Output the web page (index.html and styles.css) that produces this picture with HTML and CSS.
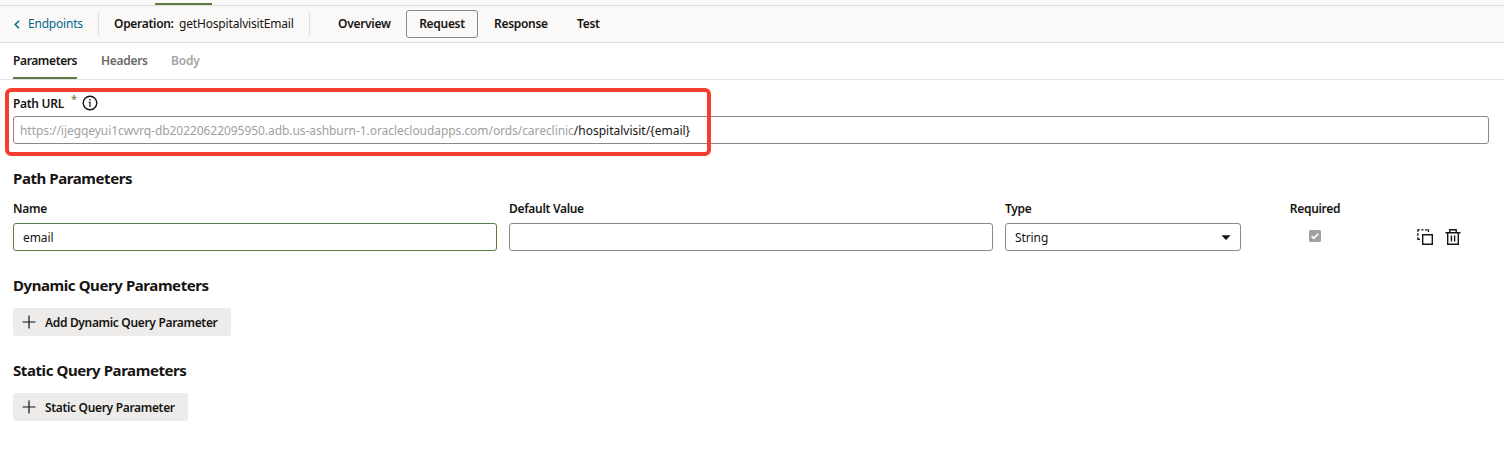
FILE: index.html
```
<!DOCTYPE html>
<html lang="en">
<head>
<meta charset="utf-8">
<title>Service Connection</title>
<link rel="stylesheet" href="styles.css">
</head>
<body>
<div class="strip"><div class="strip-active"></div></div>
<header class="toolbar">
  <a class="back"><svg width="6" height="9" viewBox="0 0 6 9"><path d="M5 .7 1.2 4.5 5 8.3" fill="none" stroke="currentColor" stroke-width="1.5"/></svg><span>Endpoints</span></a>
  <div class="operation"><span class="op-label">Operation:</span><span class="op-name">getHospitalvisitEmail</span></div>
  <nav class="views">
    <a class="view overview">Overview</a>
    <a class="view selected">Request</a>
    <a class="view response">Response</a>
    <a class="view test">Test</a>
  </nav>
</header>
<nav class="tabs">
  <a class="tab active">Parameters</a>
  <a class="tab headers">Headers</a>
  <a class="tab disabled">Body</a>
</nav>
<main>
  <section class="url-section">
    <div class="url-label"><span>Path URL</span><span class="star">*</span>
      <svg width="16" height="16" viewBox="0 0 16 16"><circle cx="8" cy="8" r="6.8" fill="none" stroke="#161513" stroke-width="1.4"/><path d="M7.3 4h1.4v1.5H7.3zM6.6 6.7h2V12H7.4V7.8h-.8z" fill="#161513"/></svg>
    </div>
    <div class="input url"><span class="base">https://ijegqeyui1cwvrq-db20220622095950.adb.us-ashburn-1.oraclecloudapps.com/ords/careclinic</span><span class="path">/hospitalvisit/{email}</span></div>
    <div class="highlight"></div>
  </section>
  <h2 class="h-path">Path Parameters</h2>
  <div class="grid">
    <div class="label name">Name</div><div class="label default">Default Value</div><div class="label">Type</div><div class="label required">Required</div><div></div>
    <div class="input focused">email</div>
    <div class="input"></div>
    <div class="input select"><span>String</span><svg width="10" height="5" viewBox="0 0 10 5"><path d="M.5.3h9L5.6 4.4q-.6.5-1.2 0z" fill="#161513"/></svg></div>
    <div class="check"><svg width="12" height="12" viewBox="0 0 12 12"><rect width="12" height="12" rx="1.5" fill="#a1a09f"/><path d="m2.6 6.1 2.2 2.2 4.5-4.5" fill="none" stroke="#fff" stroke-width="1.6"/></svg></div>
    <div class="actions">
      <svg width="16" height="16" viewBox="0 0 16 16" fill="none" stroke="#161513" stroke-width="1.4"><path d="M5.7 5.7h9.6v9.6H5.7z"/><path d="M.2.9h2.6M4.3.9h2.2M8 .9h2.2M.9.2v2.6M.9 4.3v2.4M.9 8.2v2.8M.2 10.4h2.8M11.4.2v2.8"/></svg>
      <svg width="16" height="16" viewBox="0 0 16 16" fill="none" stroke="#161513" stroke-width="1.4"><path d="M.5 3.7h15M4.8 3.7v-3h6.4v3M2.7 3.7v11.6h10.6V3.7M6.4 6.5v6M9.6 6.5v6"/></svg>
    </div>
  </div>
  <h2 class="h-dynamic">Dynamic Query Parameters</h2>
  <button class="add dynamic"><svg width="14" height="14" viewBox="0 0 14 14"><path d="M7 .5v13M.5 7h13" stroke="#161513" stroke-width="1.2"/></svg><span>Add Dynamic Query Parameter</span></button>
  <h2 class="h-static">Static Query Parameters</h2>
  <button class="add static"><svg width="14" height="14" viewBox="0 0 14 14"><path d="M7 .5v13M.5 7h13" stroke="#161513" stroke-width="1.2"/></svg><span>Static Query Parameter</span></button>
</main>
</body>
</html>
```
FILE: styles.css
```
* { box-sizing: border-box; }
body { margin: 0; background: #fff; color: #161513; font: 12px/16px "Noto Sans", sans-serif; white-space: nowrap; overflow: hidden; }
svg { display: block; flex: none; }
.strip { height: 6px; background: #fbf9f8; border-bottom: 1px solid #dfdddc; padding-left: 155px; }
.strip-active { width: 57px; height: 5px; border-bottom: 2px solid #5a7b46; }
.toolbar { height: 37px; background: #fbf9f8; border-bottom: 1px solid #dfdddc; display: flex; align-items: center; }
.back { display: flex; align-items: center; gap: 8px; width: 99px; height: 22px; padding-left: 14px; color: #00688c; border-right: 1px solid #dfdddc; letter-spacing: -.2px; }
.operation { display: flex; width: 211px; height: 22px; align-items: center; padding-left: 15px; border-right: 1px solid #dfdddc; }
.op-label { width: 65px; font-weight: 600; letter-spacing: -.3px; }
.op-name { letter-spacing: -.17px; }
.views { display: flex; align-items: center; font-weight: 600; letter-spacing: -.3px; }
.view { display: flex; align-items: center; height: 28px; }
.overview { width: 96px; padding-left: 28px; }
.selected { width: 72px; justify-content: center; border: 1px solid #8b8886; border-radius: 3px; }
.response { width: 99px; padding-left: 16px; }
.tabs { height: 37px; display: flex; padding-left: 13px; border-bottom: 1px solid #e4e2e1; font-weight: 600; letter-spacing: -.38px; }
.tab { height: 36px; padding-top: 10px; }
.active { width: 64px; border-bottom: 2px solid #5a7b46; }
.headers { width: 94px; padding-left: 24px; color: #6b6967; letter-spacing: -.3px; }
.disabled { color: #a6a4a2; letter-spacing: -.2px; }
main { padding: 15px 15px 0 13px; }
.url-section { position: relative; }
.url-label { display: flex; height: 16px; margin-bottom: 5px; font-weight: 600; letter-spacing: -.3px; }
.url-label span:first-child { width: 58px; padding-top: 1px; }
.star { width: 11px; color: #5a7b46; font-size: 11px; font-weight: 400; margin-top: -4px; }
.input { display: flex; align-items: center; height: 28px; border: 1px solid #8b8886; border-radius: 3px; padding: 1px 9px 0; background: #fff; letter-spacing: -.1px; }
.url { padding: 2px 6px 0; width: 1476px; letter-spacing: -.06px; }
.base { color: #a1a09f; }
.path { color: #161513; letter-spacing: 0; }
.highlight { position: absolute; left: -8px; top: -7px; width: 706px; height: 68px; border: 4px solid #f33f2e; border-radius: 6px; }
h2 { margin: 0; font-size: 15px; line-height: 20px; font-weight: 700; letter-spacing: -.42px; }
.h-path { margin-top: 24px; }
.grid { display: grid; grid-template-columns: 484px 484px 236px 124px 1fr; grid-template-rows: 16px 28px; gap: 6px 12px; margin-top: 13px; }
.label { font-weight: 600; letter-spacing: -.3px; }
.required { text-align: center; }
.focused { border-color: #5a7b46; }
.select { justify-content: space-between; }
.check { display: flex; justify-content: center; padding-top: 7px; }
.actions { display: flex; gap: 12px; padding: 6px 0 0 28px; }
.h-dynamic { margin-top: 24px; }
.h-static { margin-top: 24px; }
.add { display: flex; align-items: center; gap: 8px; height: 28px; margin-top: 13px; padding: 0 0 0 10px; border: 0; border-radius: 3px; background: #edecea; color: #161513; font: 600 12px/16px "Noto Sans", sans-serif; letter-spacing: -.33px; }
.add svg { margin-left: -1px; margin-right: 1px; }
.add span { padding-top: 2px; }
.dynamic { width: 218px; }
.static { width: 175px; }
```
